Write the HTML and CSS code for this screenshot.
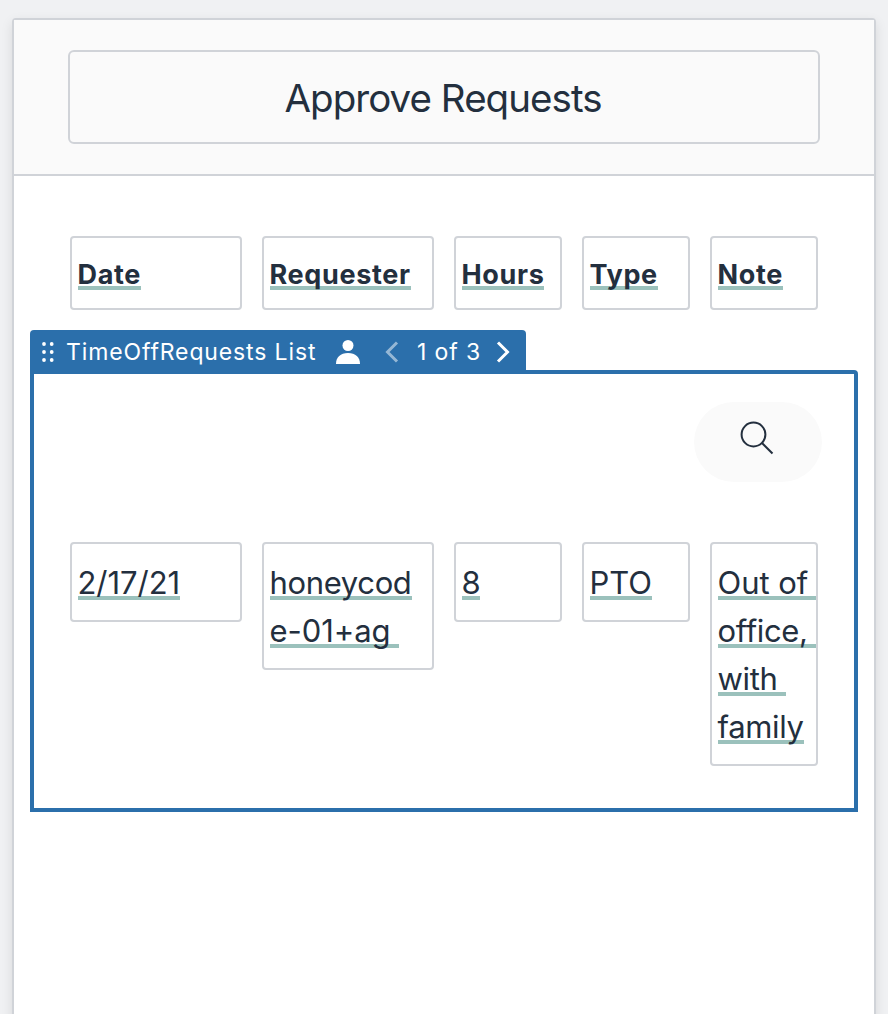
FILE: index.html
```html
<!DOCTYPE html>
<html lang="en">
<head>
<meta charset="utf-8">
<title>Approve Requests</title>
<link rel="stylesheet" href="styles.css">
</head>
<body>
<main class="screen">
  <header class="screen-header">
    <h1 class="title">Approve Requests</h1>
  </header>
  <section class="content">
    <div class="row row-head">
      <div class="cell"><span class="line">Date</span></div>
      <div class="cell"><span class="line">Requester</span></div>
      <div class="cell"><span class="line">Hours</span></div>
      <div class="cell"><span class="line">Type</span></div>
      <div class="cell"><span class="line">Note</span></div>
    </div>
    <div class="list">
      <div class="tab">
        <svg class="grip" width="12" height="20" viewBox="0 0 12 20" fill="#fff"><circle cx="2" cy="2" r="1.900"/><circle cx="9.700" cy="2" r="1.900"/><circle cx="2" cy="10" r="1.900"/><circle cx="9.700" cy="10" r="1.900"/><circle cx="2" cy="18" r="1.900"/><circle cx="9.700" cy="18" r="1.900"/></svg>
        <span class="tab-name">TimeOffRequests List</span>
        <svg class="person" width="24" height="24" viewBox="0 0 24 24" fill="#fff"><circle cx="12" cy="5.500" r="5.500"/><path d="M0 24C0 17 4.500 13 12 13S24 17 24 24Z"/></svg>
        <svg class="prev" width="14" height="22" viewBox="0 0 14 22"><path d="M12 1.500L2.500 11L12 20.500"/></svg>
        <span class="tab-count">1 of 3</span>
        <svg class="next" width="14" height="22" viewBox="0 0 14 22"><path d="M2 1.500L11.500 11L2 20.500"/></svg>
      </div>
      <div class="list-body">
        <div class="search">
          <svg width="34" height="34" viewBox="0 0 34 34"><circle cx="13.500" cy="13.500" r="11.900"/><path d="M22 22L32.500 32.500"/></svg>
        </div>
        <div class="row row-data">
          <div class="cell"><span class="line numeric">2/17/21</span></div>
          <div class="cell"><span class="line">honeycod</span><span class="line numeric">e-01+ag </span></div>
          <div class="cell"><span class="line digit">8</span></div>
          <div class="cell"><span class="line numeric">PTO</span></div>
          <div class="cell"><span class="line numeric">Out of </span><span class="line">office, </span><span class="line">with </span><span class="line">family</span></div>
        </div>
      </div>
    </div>
  </section>
</main>
</body>
</html>
```
FILE: styles.css
```css
* { box-sizing: border-box; }
html, body { height: 100%; margin: 0; overflow: hidden; }
body {
  padding: 18px 12px 0;
  background: #f0f1f3;
  color: #232f3e;
  font-family: Inter, "Liberation Sans", sans-serif;
}
.screen {
  height: 1020px;
  border: 2px solid #d0d3d8;
  border-radius: 4px 4px 0 0;
  background: #fff;
  box-shadow: 0 4px 12px rgba(0, 0, 0, .1);
}
.screen-header {
  height: 156px;
  padding: 30px 54px;
  border-bottom: 2px solid #d0d3d8;
  background: #fafafa;
}
.title {
  height: 94px;
  margin: 0;
  padding-right: 2px;
  border: 2px solid #d0d3d8;
  border-radius: 6px;
  font-size: 38.5px;
  font-weight: 400;
  letter-spacing: -.95px;
  line-height: 92px;
  text-align: center;
}
.content { padding: 60px 16px 0; }
.row {
  display: grid;
  grid-template-columns: 172px 172px 108px 108px 108px;
  gap: 20px;
  align-items: start;
}
.row-head {
  padding-left: 40px;
  font-size: 27px;
  font-weight: 700;
  letter-spacing: .65px;
  line-height: 42px;
}
.row-data {
  margin-top: 60px;
  padding-left: 36px;
  font-size: 31px;
  letter-spacing: -.35px;
  line-height: 48px;
}
.cell {
  display: flex;
  flex-direction: column;
  align-items: flex-start;
  padding: 15px 0 13px 6px;
  border: 2px solid #d0d3d8;
  border-radius: 4px;
}
.row-head .cell { padding: 16px 0 12px 6px; }
.line {
  max-width: 100%;
  white-space: pre;
  text-indent: -.5px;
  background: linear-gradient(#9bc1bc, #9bc1bc) no-repeat 0 37px / 100% 4px;
}
.row-head .line { background-position: 0 32px; }
.numeric { letter-spacing: -.05px; }
.digit { letter-spacing: -1px; }
.list { margin-top: 20px; }
.tab {
  display: flex;
  align-items: center;
  width: 496px;
  height: 40px;
  padding: 4px 0 0 12px;
  border-radius: 4px 4px 0 0;
  background: #2b6fab;
  color: #fff;
  font-size: 23px;
  font-weight: 400;
  line-height: 40px;
  white-space: nowrap;
}
.tab svg { flex: none; }
.tab-name { width: 250px; margin-left: 12px; letter-spacing: .87px; }
.person { margin-left: 20px; }
.prev, .next { fill: none; stroke: #fff; stroke-width: 3; }
.prev { margin-left: 25px; opacity: .5; }
.tab-count { width: 64px; margin-left: 18px; letter-spacing: .9px; }
.next { margin-left: 15px; }
.list-body {
  width: 828px;
  height: 442px;
  padding-top: 28px;
  border: 4px solid #2b6fab;
  border-radius: 0 4px 0 0;
}
.search {
  display: flex;
  justify-content: center;
  width: 128px;
  height: 80px;
  margin-left: 660px;
  padding: 19px 2px 0 0;
  border-radius: 40px;
  background: #fafafa;
}
.search svg { fill: none; stroke: #232f3e; stroke-width: 2; }
```
